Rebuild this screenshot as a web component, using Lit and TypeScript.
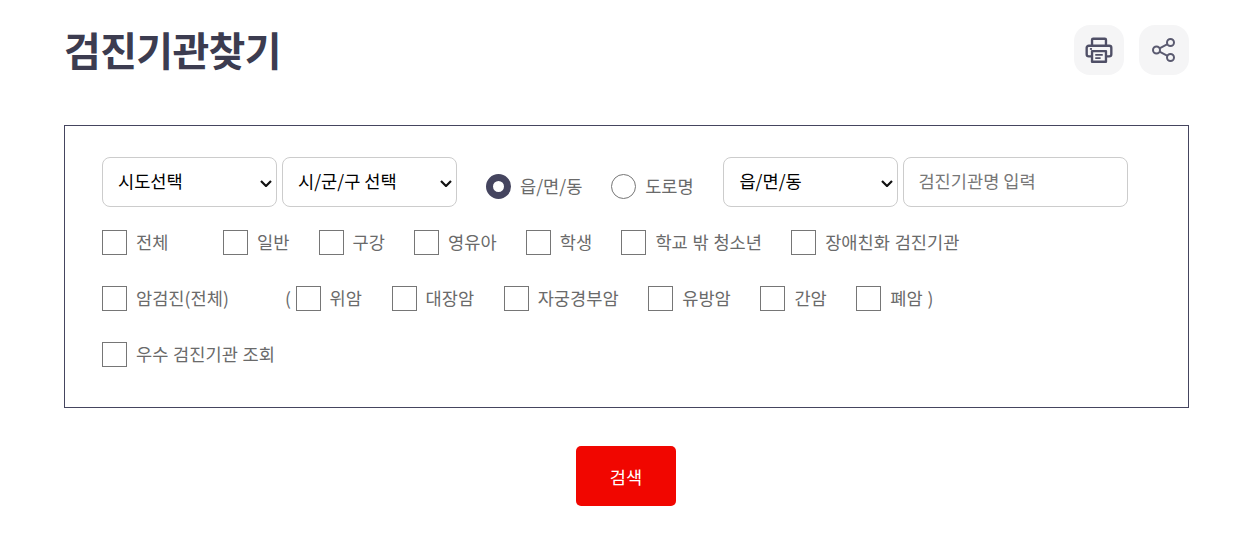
import { LitElement, html, css } from 'lit'
import { customElement } from 'lit/decorators.js'

const serviceTypes = ['일반', '구강', '영유아', '학생', '학교 밖 청소년', '장애친화 검진기관']
const cancerTypes = ['위암', '대장암', '자궁경부암', '유방암', '간암']

@customElement('app-root')
export class AppRoot extends LitElement {
  static styles = css`
    :host {
      display: block;
      padding: 25px 44px 30px 64px;
      font-family: 'Noto Sans CJK KR', sans-serif;
      color: #6a6a6a;
      font-size: 17.6px;
      word-spacing: 0.8px;
    }
    .head {
      display: flex;
      justify-content: space-between;
      align-items: center;
      height: 50px;
    }
    h1 {
      margin: 0 0 2px;
      font-size: 40px;
      font-weight: 700;
      letter-spacing: -0.65px;
      color: #3c3c50;
      line-height: 50px;
    }
    .tools {
      display: flex;
      gap: 15px;
    }
    .tool {
      width: 50px;
      height: 50px;
      border-radius: 16px;
      background: #f5f5f6;
      display: flex;
      align-items: center;
      justify-content: center;
    }
    .box {
      margin-top: 50px;
      border: 1px solid #45455f;
      padding: 31px 37px 40px;
      height: 283px;
      box-sizing: border-box;
      display: flex;
      flex-direction: column;
      gap: 31px;
    }
    .top {
      display: flex;
      align-items: flex-start;
      gap: 5px;
      height: 50px;
      margin-bottom: -8px;
    }
    select,
    .name {
      height: 50px;
      box-sizing: border-box;
      border: 1px solid #ccc;
      border-radius: 8px;
      background: #fff;
      font: inherit;
      color: #000;
      padding: 0 11px 4px;
    }
    select {
      width: 175px;
      appearance: none;
      padding-left: 15px;
      background: #fff
        url("data:image/svg+xml,%3Csvg xmlns='http://www.w3.org/2000/svg' width='12' height='7'%3E%3Cpath d='M1 1l5 5 5-5' fill='none' stroke='%23111' stroke-width='2.2'/%3E%3C/svg%3E")
        no-repeat 157px 22px;
    }
    .name {
      width: 225px;
      padding: 0 14px 4px;
      outline: none;
    }
    .name::placeholder {
      color: #777;
    }
    .radios {
      display: flex;
      align-items: center;
      gap: 28.8px;
      height: 58px;
      margin: 0 24.7px 0 24px;
    }
    .row {
      display: flex;
      align-items: center;
      gap: 29.2px;
      height: 25px;
    }
    .row.cancers {
      gap: 29.6px;
    }
    label {
      display: flex;
      align-items: flex-start;
      gap: 9px;
      line-height: 23px;
      white-space: nowrap;
    }
    input[type='checkbox'],
    input[type='radio'] {
      appearance: none;
      margin: 0;
      width: 25px;
      height: 25px;
      flex: none;
      background: #fff;
      border: 1px solid #767676;
    }
    input[type='radio'] {
      border-radius: 50%;
    }
    input[type='radio']:checked {
      border: 7px solid #45455f;
    }
    .all {
      margin-right: 25.4px;
    }
    .cancer {
      margin-right: 26.6px;
    }
    .paren {
      margin-right: -25px;
      line-height: 23px;
      align-self: flex-start;
    }
    .actions {
      display: flex;
      justify-content: center;
      margin-top: 38px;
      padding-right: 1px;
    }
    button {
      width: 100px;
      height: 60px;
      border: 0;
      border-radius: 5px;
      background: #f10600;
      color: #fff;
      font: inherit;
    }
  `

  render() {
    return html`
      <div class="head">
        <h1>검진기관찾기</h1>
        <div class="tools">
          <div class="tool">
            <svg width="30" height="30" viewBox="0 0 28 28" fill="none" stroke="#4f4f66" stroke-width="2.2" stroke-linejoin="round">
              <path d="M7.5 10V4.5a1 1 0 0 1 1-1h11a1 1 0 0 1 1 1V10" />
              <path d="M7.5 20H4.5a2 2 0 0 1-2-2v-6a2 2 0 0 1 2-2h19a2 2 0 0 1 2 2v6a2 2 0 0 1-2 2h-3" />
              <rect x="7.5" y="15" width="13" height="10" />
              <path d="M10.5 18.5h7M10.5 21.5h5" stroke-width="1.6" />
              <path d="M5.5 13h2" stroke-width="1.6" />
            </svg>
          </div>
          <div class="tool">
            <svg width="26" height="26" viewBox="0 0 26 26" fill="none" stroke="#5a5a70" stroke-width="2">
              <circle cx="19.5" cy="5.5" r="3.5" />
              <circle cx="5.5" cy="13" r="3.5" />
              <circle cx="19.5" cy="20.5" r="3.5" />
              <path d="M16.5 7.2 8.5 11.3M8.5 14.7l8 4.1" />
            </svg>
          </div>
        </div>
      </div>

      <div class="box">
        <div class="top">
          <select><option>시도선택</option></select>
          <select><option>시/군/구 선택</option></select>
          <div class="radios">
            <label><input type="radio" name="addr" checked />읍/면/동</label>
            <label><input type="radio" name="addr" />도로명</label>
          </div>
          <select><option>읍/면/동</option></select>
          <input class="name" type="text" placeholder="검진기관명 입력" />
        </div>

        <div class="row">
          <label class="all"><input type="checkbox" />전체</label>
          ${serviceTypes.map((t) => html`<label><input type="checkbox" />${t}</label>`)}
        </div>

        <div class="row cancers">
          <label class="cancer"><input type="checkbox" />암검진(전체)</label>
          <span class="paren">(</span>
          ${cancerTypes.map((t) => html`<label><input type="checkbox" />${t}</label>`)}
          <label><input type="checkbox" />폐암 )</label>
        </div>

        <div class="row">
          <label><input type="checkbox" />우수 검진기관 조회</label>
        </div>
      </div>

      <div class="actions"><button>검색</button></div>
    `
  }
}
